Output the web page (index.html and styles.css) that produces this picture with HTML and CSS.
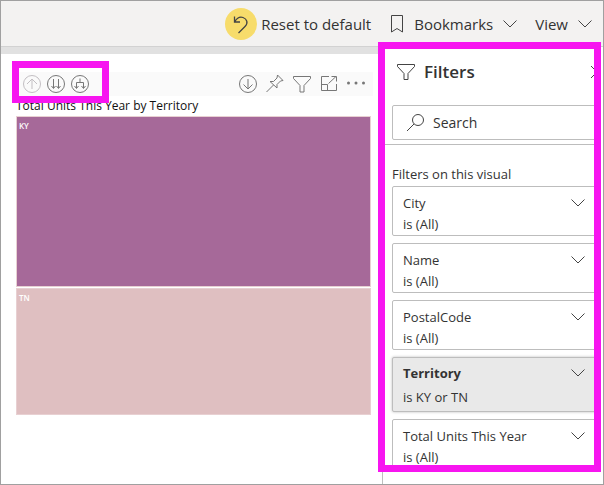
FILE: index.html
```html
<!DOCTYPE html>
<html lang="en">
<head>
<meta charset="utf-8">
<title>Report filters</title>
<link rel="stylesheet" href="styles.css">
</head>
<body>
<div class="app">
  <header class="topbar">
    <button class="reset">
      <span class="reset-badge"><svg width="16" height="20" viewBox="0 0 16 20"><path d="M1.5 2.5V8H7M1.8 7.7C4 4 7 2.500 10 3.500C14 5 15.500 9 12 12.500L5.500 19"/></svg></span>
      Reset to default
    </button>
    <button class="bookmarks">
      <svg width="14" height="20" viewBox="0 0 14 20"><path d="M1.500 1.500H12.500V18L7 14.500L1.500 18Z"/></svg>
      <span>Bookmarks</span>
      <svg class="chevron" width="14" height="8" viewBox="0 0 14 8"><path d="M.5.5 7 7 13.500.5"/></svg>
    </button>
    <button class="view">
      <span>View</span>
      <svg class="chevron" width="14" height="8" viewBox="0 0 14 8"><path d="M.5.5 7 7 13.500.5"/></svg>
    </button>
  </header>
  <div class="workspace">
    <main class="canvas">
      <div class="visual-toolbar">
        <div class="drill">
          <button class="faded" aria-label="Drill up"><svg width="20" height="20" viewBox="0 0 20 20"><circle cx="10" cy="10" r="8.500"/><path d="M10 15V5M5 10l5-5 5 5"/></svg></button>
          <button aria-label="Go to the next level"><svg width="20" height="20" viewBox="0 0 20 20"><circle cx="10" cy="10" r="8.500"/><path d="M7.500 5v9M12.500 5v9M5.500 12l2 2.500 2-2.500M10.500 12l2 2.500 2-2.500"/></svg></button>
          <button aria-label="Expand all down one level"><svg width="20" height="20" viewBox="0 0 20 20"><circle cx="10" cy="10" r="8.500"/><path d="M10 4.500v4M6.500 14V8.500h7V14M4.500 12l2 2.500 2-2.500M11.500 12l2 2.500 2-2.500"/></svg></button>
          <div class="callout"></div>
        </div>
        <div class="actions">
          <button aria-label="Drill down"><svg width="20" height="20" viewBox="0 0 20 20"><circle cx="10" cy="10" r="8.500"/><path d="M10 5v10M5.500 10.500 10 15l4.500-4.500"/></svg></button>
          <button aria-label="Pin visual"><svg width="20" height="20" viewBox="0 0 20 20"><path d="M12.500 1l5.500 5.500-2.500.5-3.500 3.500v3.500L5 7.500h3.500L12 4ZM8.500 11l-7 7"/></svg></button>
          <button aria-label="Filters"><svg width="20" height="20" viewBox="0 0 20 20"><path d="M1.500 2.500h17v2L12 11.500V18H8v-6.500L1.500 4.500Z"/></svg></button>
          <button aria-label="Focus mode"><svg width="20" height="20" viewBox="0 0 20 20"><path d="M10 2.500H2.500V16.500H17.500V10M2.500 10.500H8.500V16.500M9.500 9.500l7.500-7M12.500 2.500H17.500V7.500"/></svg></button>
          <button aria-label="More options"><svg class="dots" width="20" height="20" viewBox="0 0 20 20"><circle cx="2.500" cy="9" r="1.500"/><circle cx="10" cy="9" r="1.500"/><circle cx="17.500" cy="9" r="1.500"/></svg></button>
        </div>
      </div>
      <h1 class="visual-title">Total Units This Year by Territory</h1>
      <div class="treemap">
        <div class="tile ky">KY</div>
        <div class="tile tn">TN</div>
      </div>
    </main>
    <aside class="pane">
      <div class="pane-view">
        <div class="pane-head">
          <svg width="20" height="18" viewBox="0 0 20 18"><path d="M1.500 1.500h17v2L12 10.500V16.500H8v-6L1.500 3.500Z"/></svg>
          <h2>Filters</h2>
          <button class="expand" aria-label="Collapse pane"><svg width="8" height="14" viewBox="0 0 8 14"><path d="M1 1l6 6-6 6"/></svg></button>
        </div>
        <label class="search">
          <svg width="20" height="20" viewBox="0 0 20 20"><circle cx="12" cy="7" r="5.500"/><path d="M8 11l-7 7"/></svg>
          <input type="text" placeholder="Search" aria-label="Search">
        </label>
        <h3>Filters on this visual</h3>
        <div class="cards">
          <button class="card"><span class="name">City</span><svg class="chevron" width="14" height="8" viewBox="0 0 14 8"><path d="M.5.5 7 7 13.500.5"/></svg><span>is (All)</span></button>
          <button class="card"><span class="name">Name</span><svg class="chevron" width="14" height="8" viewBox="0 0 14 8"><path d="M.5.5 7 7 13.500.5"/></svg><span>is (All)</span></button>
          <button class="card"><span class="name">PostalCode</span><svg class="chevron" width="14" height="8" viewBox="0 0 14 8"><path d="M.5.5 7 7 13.500.5"/></svg><span>is (All)</span></button>
          <button class="card active"><span class="name">Territory</span><svg class="chevron" width="14" height="8" viewBox="0 0 14 8"><path d="M.5.5 7 7 13.500.5"/></svg><span>is KY or TN</span></button>
          <button class="card"><span class="name">Total Units This Year</span><svg class="chevron" width="14" height="8" viewBox="0 0 14 8"><path d="M.5.5 7 7 13.500.5"/></svg><span>is (All)</span></button>
        </div>
      </div>
      <div class="callout"></div>
    </aside>
  </div>
</div>
</body>
</html>
```

FILE: styles.css
```css
* { box-sizing: border-box; }
body { margin: 0; font-family: "Open Sans", "Noto Sans", sans-serif; color: #333; background: #fff; }
h1, h2, h3 { margin: 0; font-weight: 400; }
button { display: flex; align-items: center; margin: 0; padding: 0; border: 0; background: none; font: inherit; color: inherit; text-align: left; }
svg { display: block; flex: none; fill: none; stroke: #444; stroke-width: 1; }
.app { display: flex; flex-direction: column; min-height: 100vh; border: 1px solid #a0a0a0; }
.topbar { display: flex; justify-content: flex-end; align-items: center; height: 46px; padding-right: 11px; background: #f3f2f1; border-bottom: 1px solid #d2d2d2; font-size: 15px; white-space: nowrap; }
.reset { gap: 4px; }
.reset-badge { display: flex; align-items: center; justify-content: center; width: 32px; height: 32px; border-radius: 50%; background: #f7dc6b; }
.reset-badge svg { stroke-width: 1.3; }
.bookmarks { gap: 10px; margin-left: 19px; }
.view { gap: 10px; margin-left: 18px; }
.workspace { flex: 1; display: flex; }
.canvas { flex: 1; min-width: 0; border-top: 7px solid #e1e1e1; padding: 18px 9px 16px 15px; }
.visual-toolbar { display: flex; justify-content: space-between; align-items: center; height: 24px; background: #fafafa; }
.visual-toolbar svg { stroke: #777; }
.visual-toolbar .faded svg { stroke: #c3bfc3; }
.drill { position: relative; display: flex; gap: 4px; padding-left: 6px; }
.actions { display: flex; gap: 7px; padding-right: 7px; }
.visual-toolbar .dots { fill: #777; stroke: none; }
.callout { position: absolute; border: 7px solid #f715f0; pointer-events: none; }
.drill .callout { top: -13px; left: -4px; width: 97px; height: 42px; }
.visual-title { font-size: 12px; line-height: 20px; color: #111; }
.treemap { display: grid; grid-template-rows: 171px 127px; gap: 1px; margin-right: 2px; }
.tile { padding: 3px 2px; border: 1px solid #e8d0d2; font-size: 8px; line-height: 12px; font-weight: 600; color: #fff; }
.ky { background: #a66999; }
.tn { background: #dfbfc1; }
.pane { position: relative; flex: 0 0 221px; min-width: 0; border-left: 1px solid #bebebe; }
.pane-view { overflow: hidden; margin-right: 5px; padding-left: 9px; height: 422px; }
.pane .callout { top: -5px; bottom: 12px; left: -5px; right: 2px; }
.pane-head { display: flex; align-items: center; height: 50px; padding-left: 4px; }
.pane-head h2 { margin-left: 8px; font-size: 17px; line-height: 24px; font-weight: 600; }
.expand { margin-left: auto; }
.search { display: flex; align-items: center; height: 35px; margin-top: 8px; padding-left: 13px; border: 1px solid #bdbdbd; border-radius: 2px; }
.search input { flex: 1; min-width: 0; border: 0; padding: 0; margin-left: 7px; outline: 0; background: none; font: inherit; font-size: 14px; }
.search input::placeholder { color: #333; opacity: 1; }
.pane h3 { margin: 4px 0 0 -9px; padding: 18px 0 0 9px; border-top: 1px solid #bdbdbd; font-size: 13px; line-height: 22px; }
.cards { display: grid; gap: 7px; margin-top: 1px; }
.card { display: grid; grid-template-columns: 1fr auto; grid-auto-rows: 21px; align-items: center; align-content: start; height: 50px; padding: 5px 12px 0 10px; border: 1px solid #bdbdbd; border-radius: 2px; font-size: 13px; line-height: 20px; white-space: nowrap; }
.card.active { grid-auto-rows: 24px; height: 55px; padding-top: 3px; background: #e9e9e9; box-shadow: 0 0 3px #bbb; }
.active .name { font-weight: 700; }
```
